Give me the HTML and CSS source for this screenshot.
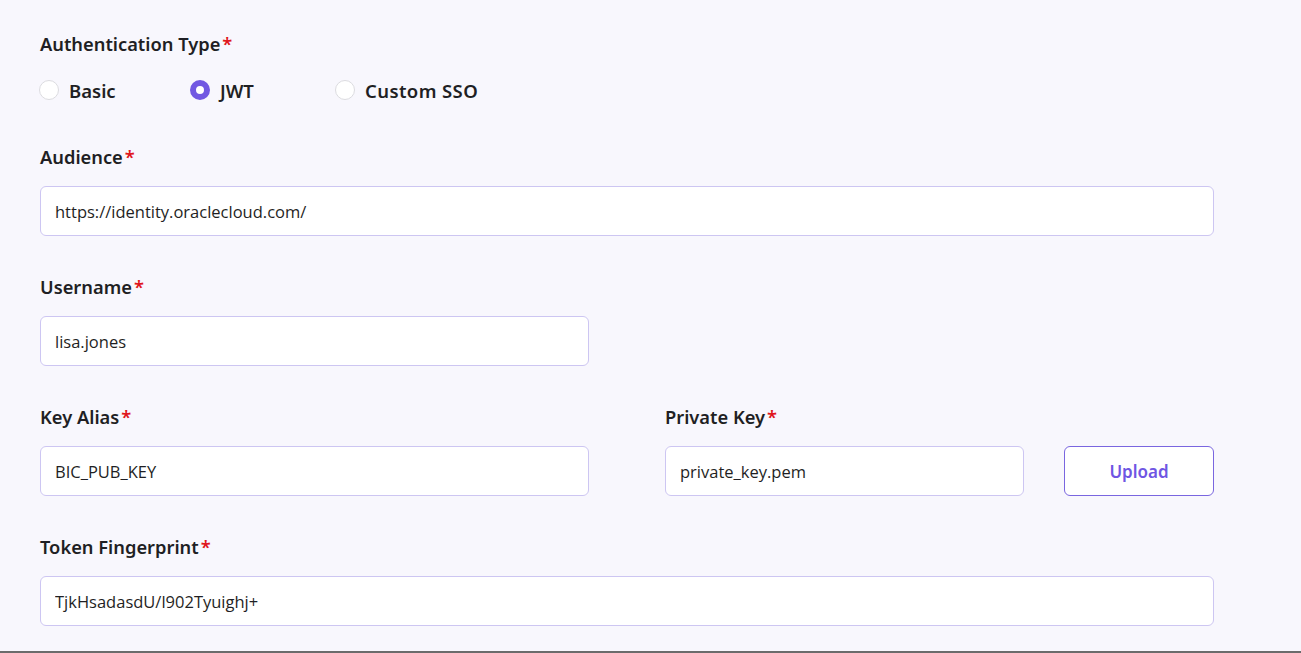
FILE: index.html
```html
<!DOCTYPE html>
<html lang="en">
<head>
    <meta charset="UTF-8">
    <meta name="viewport" content="width=device-width, initial-scale=1.0">
    <title>Authentication Settings</title>
    <link rel="stylesheet" href="styles.css">
</head>
<body>
    <div class="page">
        <form class="auth-form">
            <div class="field">
                <label class="field-label">Authentication Type<span class="req">*</span></label>
                <div class="radio-row">
                    <label class="radio"><input type="radio" name="authType" value="basic"><span>Basic</span></label>
                    <label class="radio"><input type="radio" name="authType" value="jwt" checked><span>JWT</span></label>
                    <label class="radio"><input type="radio" name="authType" value="sso"><span>Custom SSO</span></label>
                </div>
            </div>

            <div class="field">
                <label class="field-label" for="audience">Audience<span class="req">*</span></label>
                <input class="text-input" type="text" id="audience" value="https://identity.oraclecloud.com/">
            </div>

            <div class="field half">
                <label class="field-label" for="username">Username<span class="req">*</span></label>
                <input class="text-input" type="text" id="username" value="lisa.jones">
            </div>

            <div class="two-col">
                <div class="field">
                    <label class="field-label" for="keyAlias">Key Alias<span class="req">*</span></label>
                    <input class="text-input" type="text" id="keyAlias" value="BIC_PUB_KEY">
                </div>
                <div class="field">
                    <label class="field-label" for="privateKey">Private Key<span class="req">*</span></label>
                    <div class="upload-row">
                        <input class="text-input" type="text" id="privateKey" value="private_key.pem">
                        <button type="button" class="upload-btn">Upload</button>
                    </div>
                </div>
            </div>

            <div class="field">
                <label class="field-label" for="fingerprint">Token Fingerprint<span class="req">*</span></label>
                <input class="text-input" type="text" id="fingerprint" value="TjkHsadasdU/l902Tyuighj+">
            </div>
        </form>
    </div>
</body>
</html>
```

FILE: styles.css
```css
html, body {
    margin: 0;
    padding: 0;
}
body {
    background: #f8f7fd;
    font-family: "Noto Sans", "Open Sans", sans-serif;
    color: #1f1f24;
    height: 653px;
    box-sizing: border-box;
    border-bottom: 2px solid #6b6b6b;
    overflow: hidden;
}
.page {
    padding: 30px 0 0 40px;
}
.auth-form {
    width: 1174px;
    display: flex;
    flex-direction: column;
    gap: 37px;
}
.field {
    display: flex;
    flex-direction: column;
}
.field.half {
    width: 549px;
}
.field-label {
    font-size: 18.3px;
    font-weight: 600;
    line-height: 28px;
    margin-bottom: 15px;
}
.req {
    color: #e0161c;
    margin-left: 2px;
}
.radio-row {
    display: flex;
    height: 32px;
    align-items: center;
    margin-top: 1px;
}
.radio {
    display: flex;
    align-items: center;
    gap: 10px;
    font-size: 18.5px;
    font-weight: 600;
    cursor: pointer;
}
.radio:nth-child(1) { width: 151px; }
.radio:nth-child(2) { width: 145px; }
.radio:nth-child(3) span { letter-spacing: 0.4px; }
.radio input {
    appearance: none;
    -webkit-appearance: none;
    width: 20px;
    height: 20px;
    margin: 0 0 0 -1px;
    border: 1px solid #dcdce0;
    border-radius: 50%;
    background: #fff;
    box-sizing: border-box;
}
.radio input:checked {
    border: 6px solid #7158e2;
    background: #fff;
}
.text-input {
    height: 50px;
    box-sizing: border-box;
    padding: 0 14px;
    border: 1px solid #cdc6f2;
    border-radius: 6px;
    background: #fff;
    font-family: "Open Sans", sans-serif;
    font-size: 16.5px;
    color: #1f1f24;
    outline: none;
}
.two-col {
    display: grid;
    grid-template-columns: 549px 549px;
    column-gap: 76px;
}
.upload-row {
    display: flex;
    gap: 40px;
}
.upload-row .text-input {
    width: 359px;
}
.upload-btn {
    width: 150px;
    height: 50px;
    background: #fff;
    border: 1px solid #7a66e0;
    border-radius: 6px;
    color: #6f56e3;
    font-family: "Noto Sans", sans-serif;
    font-size: 17px;
    font-weight: 600;
    cursor: pointer;
}
```
